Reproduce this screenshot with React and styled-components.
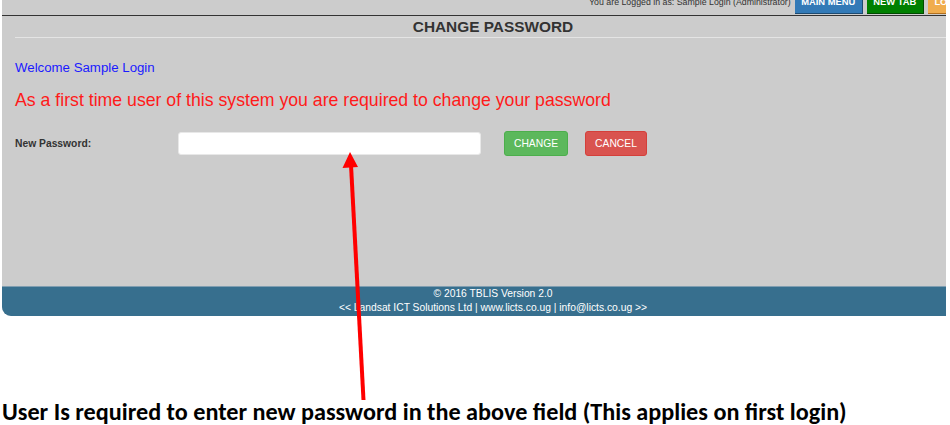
import React from "react";
import styled, { createGlobalStyle } from "styled-components";

const GlobalStyle = createGlobalStyle`
  html, body { margin: 0; padding: 0; background: #ffffff; }
  body { font-family: "Liberation Sans", Arial, sans-serif; }
  * { box-sizing: border-box; }
`;

const Page = styled.div`
  position: relative;
  width: 950px;
  height: 425px;
  overflow: hidden;
  background: #ffffff;
`;

const Viewport = styled.div`
  margin-left: 2px;
  width: 944px;
  overflow: hidden;
`;

const Panel = styled.div`
  width: 982px;
  background: #cccccc;
  border-bottom-left-radius: 9px;
  overflow: hidden;
`;

const TopBar = styled.div`
  height: 16px;
  display: flex;
  justify-content: flex-end;
  align-items: flex-start;
  gap: 4px;
  padding-right: 2px;
  border-bottom: 1px solid #333333;
  overflow: hidden;
`;

const LoggedIn = styled.span`
  margin-top: -2px;
  font-size: 8.8px;
  line-height: 9px;
  color: #333333;
  white-space: nowrap;
`;

const tones = {
  blue: ["#337ab7", "#1e4a70"],
  green: ["#008000", "#004a00"],
  orange: ["#f0ad4e", "#b07020"],
};

const TopButton = styled.span`
  height: 15px;
  margin-top: -1px;
  padding: 0 6.5px 7px;
  display: flex;
  align-items: flex-end;
  background: ${(p) => tones[p.tone][0]};
  border-bottom: 1px solid ${(p) => tones[p.tone][1]};
  border-right: 1px solid ${(p) => tones[p.tone][1]};
  color: #ffffff;
  font-size: 9.4px;
  font-weight: bold;
  line-height: 9px;
  white-space: nowrap;
`;

const Main = styled.div`
  height: 270px;
  padding: 0 13px;
`;

const Title = styled.h1`
  margin: 0;
  height: 22px;
  line-height: 22px;
  text-align: center;
  font-size: 15.4px;
  font-weight: bold;
  color: #333333;
  border-bottom: 1px solid #e4e4e4;
`;

const Welcome = styled.p`
  margin: 22px 0 0;
  font-size: 13.26px;
  line-height: 16px;
  color: #1a1aff;
`;

const Notice = styled.p`
  margin: 13px 0 0;
  font-size: 17.7px;
  line-height: 22px;
  color: #ff1a1a;
`;

const FormRow = styled.div`
  margin-top: 20px;
  height: 25px;
  display: flex;
  align-items: center;
`;

const Label = styled.label`
  width: 163px;
  font-size: 10.3px;
  font-weight: bold;
  color: #333333;
`;

const Input = styled.input`
  width: 303px;
  height: 23px;
  border: 1px solid #e8e8e8;
  border-radius: 3px;
  background: #ffffff;
  margin: 0 23px 0 0;
`;

const actions = {
  change: ["#5cb85c", "#4cae4c"],
  cancel: ["#d9534f", "#d43f3a"],
};

const ActionButton = styled.button`
  height: 25px;
  width: ${(p) => p.$w}px;
  margin-right: 17px;
  padding: 0;
  border: 1px solid ${(p) => actions[p.$kind][1]};
  border-radius: 3px;
  background: ${(p) => actions[p.$kind][0]};
  color: #ffffff;
  font-family: "Liberation Sans", Arial, sans-serif;
  font-size: 10.3px;
  line-height: 23px;
  text-align: center;
`;

const Footer = styled.footer`
  height: 30px;
  background: #376f8e;
  border-top: 1px solid #7f9db0;
  text-align: center;
  color: #ffffff;
  font-size: 10.3px;
  line-height: 14px;
`;

const FooterLine = styled.div`
  white-space: nowrap;
`;

const Caption = styled.p`
  margin: 81px 0 0;
  padding-left: 2px;
  font-family: Carlito, Calibri, "Open Sans", sans-serif;
  font-weight: bold;
  font-size: 24.2px;
  line-height: 29px;
  color: #000000;
  white-space: nowrap;
`;

const ArrowLayer = styled.svg`
  position: absolute;
  left: 0;
  top: 0;
  width: 950px;
  height: 425px;
  pointer-events: none;
`;

export default function App() {
  return (
    <>
      <GlobalStyle />
      <Page>
        <Viewport>
          <Panel>
            <TopBar>
              <LoggedIn>You are Logged in as: Sample Login (Administrator)</LoggedIn>
              <TopButton tone="blue">MAIN MENU</TopButton>
              <TopButton tone="green">NEW TAB</TopButton>
              <TopButton tone="orange">LOGOUT</TopButton>
            </TopBar>
            <Main>
              <Title>CHANGE PASSWORD</Title>
              <Welcome>Welcome Sample Login</Welcome>
              <Notice>As a first time user of this system you are required to change your password</Notice>
              <FormRow>
                <Label>New Password:</Label>
                <Input type="password" />
                <ActionButton $kind="change" $w={64}>CHANGE</ActionButton>
                <ActionButton $kind="cancel" $w={62}>CANCEL</ActionButton>
              </FormRow>
            </Main>
            <Footer>
              <FooterLine>© 2016 TBLIS Version 2.0</FooterLine>
              <FooterLine>&lt;&lt; Landsat ICT Solutions Ltd | www.licts.co.ug | info@licts.co.ug &gt;&gt;</FooterLine>
            </Footer>
          </Panel>
        </Viewport>
        <Caption>User Is required to enter new password in the above field (This applies on first login)</Caption>
        <ArrowLayer viewBox="0 0 950 425">
          <line x1="363.5" y1="400" x2="351" y2="165" stroke="#ff0000" strokeWidth="4" />
          <polygon points="350,152 342.5,168 358,167" fill="#ff0000" />
        </ArrowLayer>
      </Page>
    </>
  );
}
